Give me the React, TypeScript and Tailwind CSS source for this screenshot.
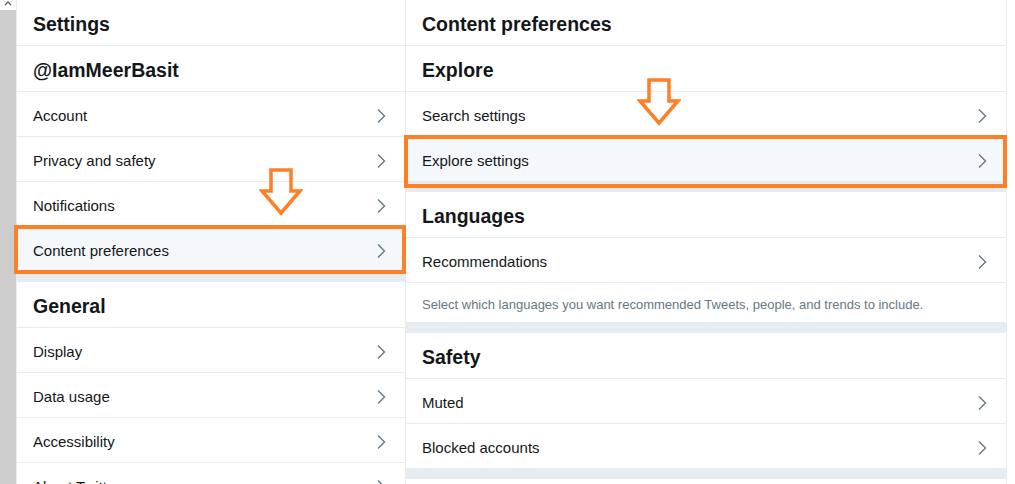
import React from "react";

const font = { fontFamily: '"Liberation Sans", Arial, sans-serif' };

function Chevron() {
  return (
    <svg width="10" height="16" viewBox="0 0 10 16" className="shrink-0">
      <polyline points="2,1.5 8.5,8 2,14.5" fill="none" stroke="#657786" strokeWidth="1.4" />
    </svg>
  );
}

function Header({ label }: { label: string }) {
  return (
    <div className="flex h-[46px] items-center border-b border-[#e6ecf0] px-4 pt-1 text-[19.5px] font-bold text-[#14171a]">
      {label}
    </div>
  );
}

function Row({ label, active }: { label: string; active?: boolean }) {
  return (
    <div
      className={`flex h-[45px] items-center justify-between border-b border-[#e6ecf0] pl-4 pr-[19px] pt-1 text-[15px] text-[#14171a] ${
        active ? "bg-[#f5f8fa]" : "bg-white"
      }`}
    >
      <span>{label}</span>
      <Chevron />
    </div>
  );
}

function Gap() {
  return <div className="h-[10px] bg-[#e6ecf0]" />;
}

function DownArrow({ className }: { className: string }) {
  return (
    <svg width="44" height="48" viewBox="0 0 44 48" className={`absolute ${className}`}>
      <polygon
        points="12,2 32,2 32,23 41,23 22,45 3,23 12,23"
        fill="none"
        stroke="#ff7f27"
        strokeWidth="3.5"
        strokeLinejoin="miter"
      />
    </svg>
  );
}

export default function App() {
  return (
    <div className="relative flex h-[484px] w-[1015px] overflow-hidden bg-white" style={font}>
      {/* scrollbar */}
      <div className="flex w-[16px] shrink-0 flex-col">
        <div className="flex h-[10px] items-start justify-center bg-white">
          <svg width="8" height="5" viewBox="0 0 8 5" className="mt-[1px]">
            <polyline points="1,4 4,1 7,4" fill="none" stroke="#606060" strokeWidth="1.3" />
          </svg>
        </div>
        <div className="flex-1 bg-[#cdcdcd]" />
      </div>

      {/* left column */}
      <div className="relative w-[390px] shrink-0 border-x border-[#e6ecf0]">
        <Header label="Settings" />
        <Header label="@IamMeerBasit" />
        <Row label="Account" />
        <Row label="Privacy and safety" />
        <Row label="Notifications" />
        <Row label="Content preferences" active />
        <Gap />
        <Header label="General" />
        <Row label="Display" />
        <Row label="Data usage" />
        <Row label="Accessibility" />
        <Row label="About Twitter" />
        <div className="absolute left-[-3px] top-[225px] h-[49px] w-[392px] border-4 border-[#ff7f27]" />
        <DownArrow className="left-[242px] top-[168px]" />
      </div>

      {/* right column */}
      <div className="relative w-[601px] shrink-0 border-r border-[#e6ecf0]">
        <Header label="Content preferences" />
        <Header label="Explore" />
        <Row label="Search settings" />
        <Row label="Explore settings" active />
        <Gap />
        <Header label="Languages" />
        <Row label="Recommendations" />
        <div className="flex h-[40px] items-center border-b border-[#e6ecf0] px-4 pt-1 text-[13px] text-[#657786]">
          Select which languages you want recommended Tweets, people, and trends to include.
        </div>
        <Gap />
        <Header label="Safety" />
        <Row label="Muted" />
        <Row label="Blocked accounts" />
        <Gap />
        <div className="absolute left-[-2px] top-[135px] h-[53px] w-[603px] border-4 border-[#ff7f27]" />
        <DownArrow className="left-[231px] top-[78px]" />
      </div>

      <div className="flex-1 bg-white" />
    </div>
  );
}
